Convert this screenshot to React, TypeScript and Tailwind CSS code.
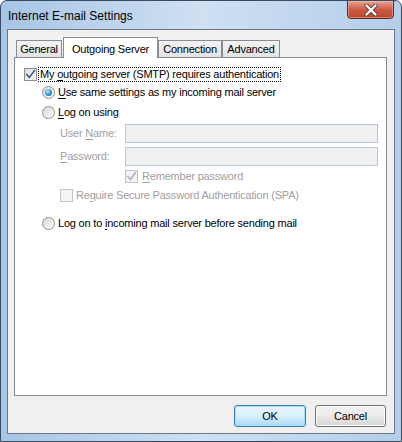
import React from 'react';

const font = { fontFamily: '"Liberation Sans", Arial, sans-serif' };

const Check: React.FC<{ checked?: boolean; disabled?: boolean }> = ({ checked, disabled }) => (
  <span
    className={`w-[13px] h-[13px] shrink-0 flex items-center justify-center border ${
      disabled ? 'border-[#c5c5c5] bg-[#f4f4f4]' : 'border-[#8e8f8f] bg-gradient-to-br from-[#dcdcdc] to-[#fdfdfd]'
    }`}
  >
    {checked && (
      <svg width="11" height="11" viewBox="0 0 11 11">
        <path
          d="M1.8 5.6 L4.3 8.4 L9.4 1.6"
          fill="none"
          stroke={disabled ? '#b5b5b5' : '#4a5f8f'}
          strokeWidth="1.7"
          strokeLinecap="square"
        />
      </svg>
    )}
  </span>
);

const Radio: React.FC<{ checked?: boolean }> = ({ checked }) => (
  <span className="w-[13px] h-[13px] shrink-0 rounded-full border border-[#8e8f8f] bg-gradient-to-br from-[#d6d6d6] to-[#ffffff] flex items-center justify-center">
    {checked && (
      <span className="w-[7px] h-[7px] rounded-full bg-[radial-gradient(circle_at_40%_35%,#c6f0ff_0%,#3f9fdc_45%,#0d4f8c_100%)]" />
    )}
  </span>
);

const Tab: React.FC<{ label: string; width: string; active?: boolean }> = ({ label, width, active }) =>
  active ? (
    <div
      className={`${width} ml-[1px] h-[21px] -mb-[1px] relative z-10 border border-b-0 border-[#898c95] bg-white flex items-start justify-center pt-[3px]`}
    >
      {label}
    </div>
  ) : (
    <div
      className={`${width} h-[17px] border border-b-0 border-[#898c95] bg-gradient-to-b from-[#f3f3f3] to-[#e3e3e3] flex items-center justify-center`}
    >
      {label}
    </div>
  );

const U: React.FC<{ children: React.ReactNode }> = ({ children }) => <span className="underline underline-offset-2">{children}</span>;

const App: React.FC = () => {
  return (
    <div
      className="w-[402px] h-[442px] flex flex-col border border-[#3a4b60] rounded-t-[7px] bg-gradient-to-r from-[#a7c5e6] via-[#cfe0f2] to-[#b3ceea] text-[11px] tracking-[-0.2px] text-black overflow-hidden"
      style={font}
    >
      {/* title bar */}
      <div className="h-[28px] shrink-0 flex justify-between pl-[7px] pr-[7px]">
        <div className="pt-[6px] text-[12px] tracking-normal text-black">Internet E-mail Settings</div>
        <button className="w-[47px] h-[19px] -mt-[1px] rounded-b-[4px] border border-[#5a2a20] bg-gradient-to-b from-[#e9a593] via-[#c95a43] to-[#c2452c] flex items-center justify-center shadow-[inset_0_0_0_1px_rgba(255,200,190,0.45)]">
          <svg width="14" height="12" viewBox="0 0 14 12">
            <path
              d="M2.5 1.5 L11.5 10.5 M11.5 1.5 L2.5 10.5"
              stroke="#5b3a35"
              strokeWidth="4"
              strokeLinecap="round"
            />
            <path
              d="M2.5 1.5 L11.5 10.5 M11.5 1.5 L2.5 10.5"
              stroke="#ffffff"
              strokeWidth="2.4"
              strokeLinecap="round"
            />
          </svg>
        </button>
      </div>

      {/* client area */}
      <div className="flex-1 mx-[6px] mb-[7px] border border-[#6a7787] bg-[#f0f0f0] flex flex-col">
        <div className="h-[20px] mt-[7px] flex items-end pl-[8px]">
          <Tab label="General" width="w-[46px]" />
          <Tab label="Outgoing Server" width="w-[95px]" active />
          <Tab label="Connection" width="w-[64px]" />
          <Tab label="Advanced" width="w-[58px]" />
        </div>

        <div className="h-[339px] ml-[6px] mr-[7px] border border-[#898c95] bg-white flex flex-col">
          <div className="h-[16px] mt-[8px] ml-[9px] flex items-center">
            <Check checked />
            <span className="ml-[1px] px-[1px] h-[15px] flex items-center border border-dotted border-black">
              <span>
                My <U>o</U>utgoing server (SMTP) requires authentication
              </span>
            </span>
          </div>

          <div className="h-[16px] mt-[2px] ml-[27px] flex items-center gap-[3px]">
            <Radio checked />
            <span>
              <U>U</U>se same settings as my incoming mail server
            </span>
          </div>

          <div className="h-[16px] mt-[4px] ml-[27px] flex items-center gap-[3px]">
            <Radio />
            <span>
              <U>L</U>og on using
            </span>
          </div>

          <div className="h-[20px] mt-[3px] ml-[45px] flex items-center text-[#a0a0a0]">
            <span className="w-[65px]">
              User <U>N</U>ame:
            </span>
            <div className="w-[253px] h-[19px] border border-[#b3c8de] bg-[#f0f0f0]" />
          </div>

          <div className="h-[20px] mt-[3px] ml-[45px] flex items-center text-[#a0a0a0]">
            <span className="w-[65px]">
              <U>P</U>assword:
            </span>
            <div className="w-[253px] h-[19px] border border-[#b3c8de] bg-[#f0f0f0]" />
          </div>

          <div className="h-[16px] mt-[2px] ml-[110px] flex items-center gap-[4px] text-[#a0a0a0]">
            <Check checked disabled />
            <span>
              <U>R</U>emember password
            </span>
          </div>

          <div className="h-[16px] mt-[3px] ml-[45px] flex items-center gap-[3px] text-[#a0a0a0]">
            <Check disabled />
            <span>
              Re<U>q</U>uire Secure Password Authentication (SPA)
            </span>
          </div>

          <div className="h-[16px] mt-[12px] ml-[27px] flex items-center gap-[3px]">
            <Radio />
            <span>
              Log on to <U>i</U>ncoming mail server before sending mail
            </span>
          </div>
        </div>

        <div className="mt-[9px] h-[22px] flex justify-end gap-[9px] pr-[8px]">
          <button className="w-[72px] h-[22px] rounded-[3px] border border-[#3c7fb1] bg-gradient-to-b from-[#eaf6fd] via-[#d9f0fc] to-[#a7d9f5] shadow-[inset_0_0_0_1px_#9fe0fb]">
            OK
          </button>
          <button className="w-[71px] h-[22px] rounded-[3px] border border-[#707070] bg-gradient-to-b from-[#f2f2f2] via-[#ebebeb] to-[#d5d5d5] shadow-[inset_0_0_0_1px_#fcfcfc]">
            Cancel
          </button>
        </div>
      </div>
    </div>
  );
};

export default App;
